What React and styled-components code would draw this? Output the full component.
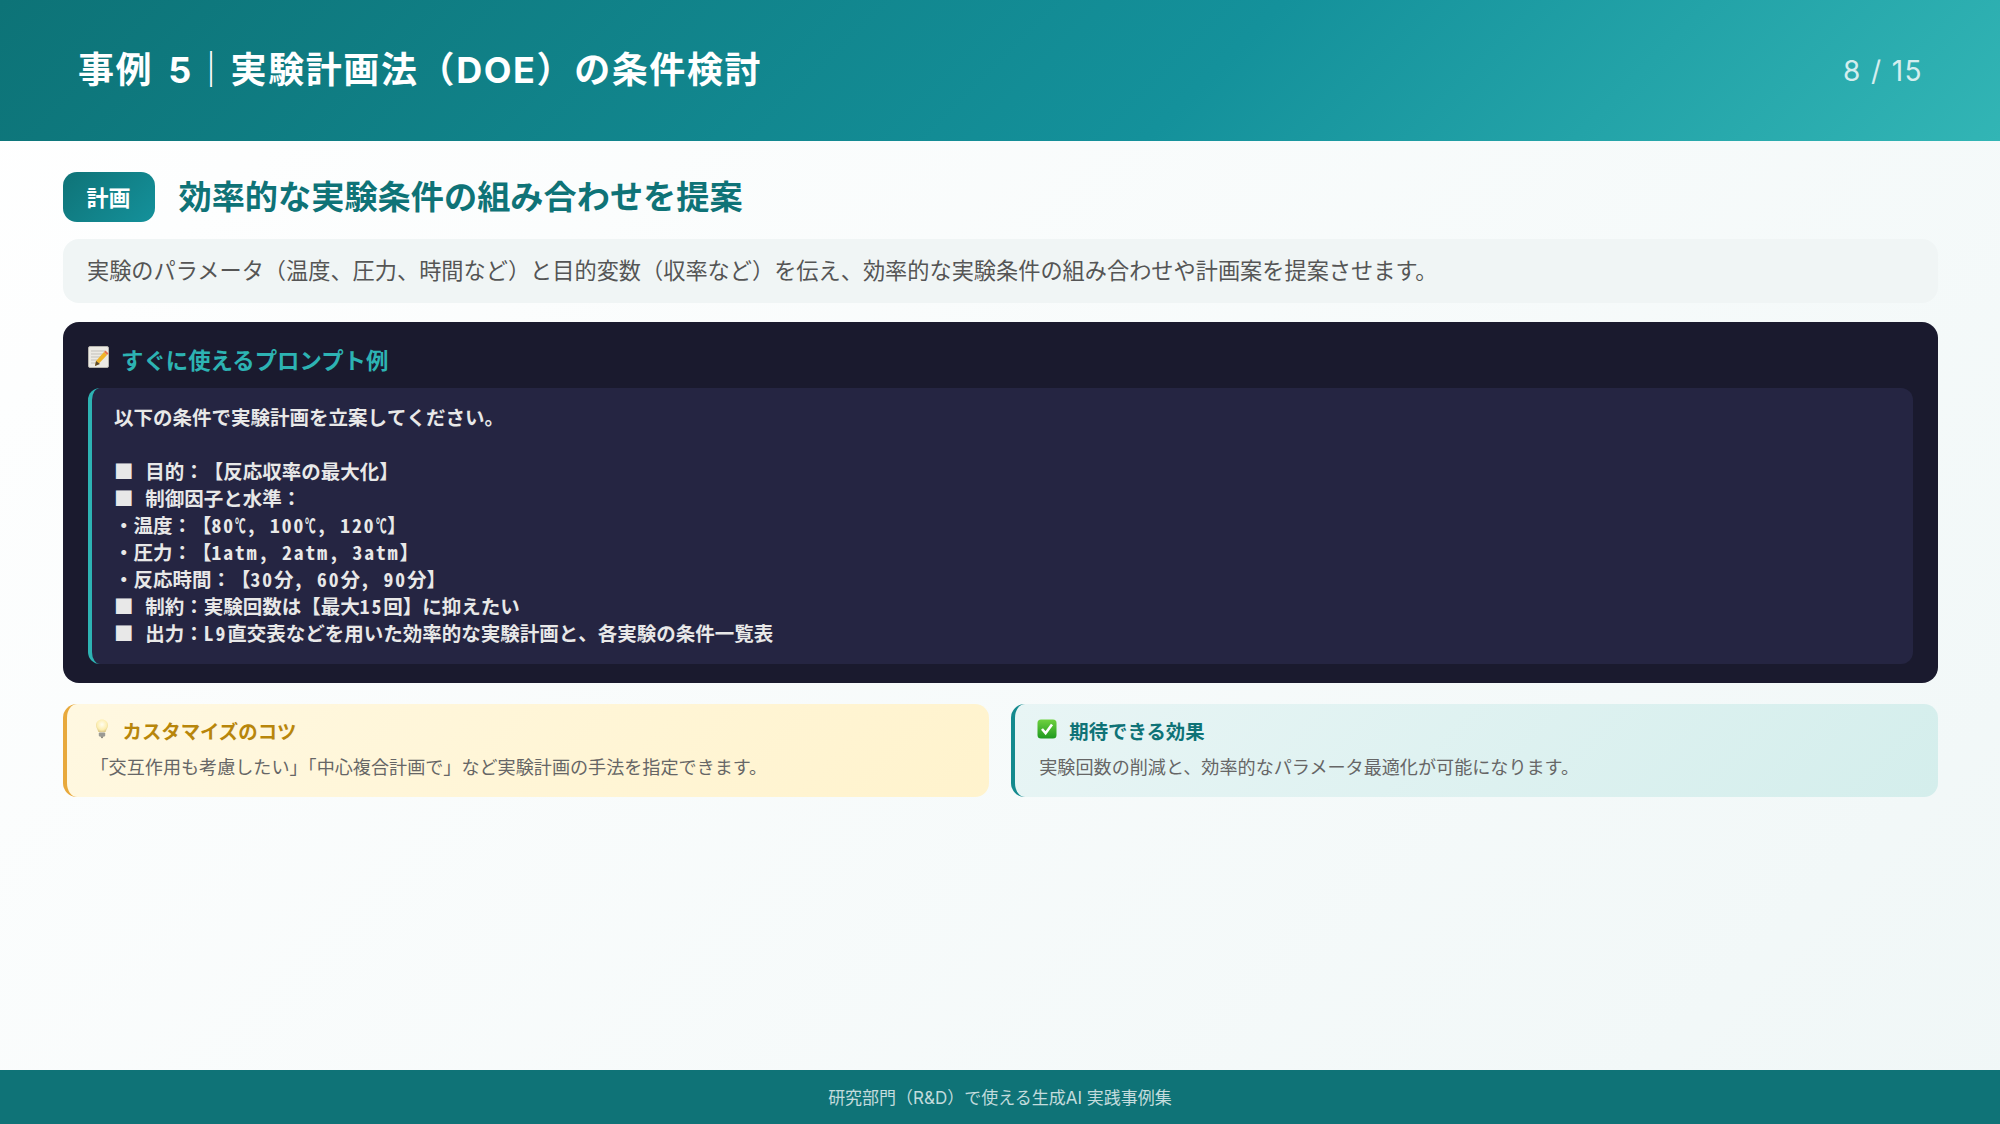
import React from "react";
import styled, { createGlobalStyle } from "styled-components";

const Global = createGlobalStyle`
  html, body { margin: 0; padding: 0; }
  body { font-family: Inter, "Noto Sans CJK JP", sans-serif; }
`;

const Page = styled.div`
  width: 2000px;
  height: 1124px;
  display: flex;
  flex-direction: column;
  background: linear-gradient(135deg, #ffffff 0%, #f0f7f7 100%);
  overflow: hidden;
`;

const Header = styled.header`
  height: 141px;
  box-sizing: border-box;
  padding: 0 77px 8px 78px;
  display: flex;
  align-items: center;
  justify-content: space-between;
  background: linear-gradient(135deg, #0d7377 0%, #14919b 60%, #32b5b5 100%);
  color: #fff;
`;

const Title = styled.h1`
  margin: 0;
  font-size: 36px;
  font-weight: 700;
  letter-spacing: 1.6px;
  word-spacing: 5px;
`;

const PageNo = styled.div`
  font-size: 28px;
  letter-spacing: 1.4px;
  opacity: 0.8;
  margin-top: 8px;
`;

const Main = styled.main`
  flex: 1;
  padding: 31px 62px 0 62.5px;
  display: flex;
  flex-direction: column;
`;

const SectionHead = styled.div`
  height: 50px;
  display: flex;
  align-items: center;
  gap: 24px;
  margin-bottom: 17px;
`;

const Badge = styled.span`
  width: 92px;
  height: 50px;
  padding-bottom: 2px;
  box-sizing: border-box;
  border-radius: 14px;
  background: linear-gradient(135deg, #0f7377 0%, #14919b 100%);
  color: #fff;
  font-size: 22px;
  font-weight: 700;
  display: flex;
  align-items: center;
  justify-content: center;
`;

const SectionTitle = styled.h2`
  margin: 0 0 5px;
  font-size: 33.2px;
  font-weight: 700;
  color: #0f7377;
`;

const Lead = styled.p`
  margin: 0 0 19px;
  height: 64px;
  box-sizing: border-box;
  padding: 0 24.5px 4px;
  display: flex;
  align-items: center;
  border-radius: 16px;
  background: #f0f5f5;
  color: #555;
  font-size: 22.2px;
`;

const PromptCard = styled.section`
  height: 361px;
  box-sizing: border-box;
  padding: 12px 25px 19px 25.5px;
  border-radius: 16px;
  background: #1a1a2e;
  display: flex;
  flex-direction: column;
  margin-bottom: 21px;
`;

const PromptHead = styled.div`
  height: 50px;
  margin-bottom: 3.5px;
  display: flex;
  align-items: center;
  gap: 12px;
  color: #2db3b3;
  font-size: 22.4px;
  font-weight: 700;
`;

const Icon = styled.svg`
  flex: none;
  margin-bottom: 4px;
`;

const PromptBody = styled.pre`
  flex: 1;
  margin: 0;
  padding: 15px 22px;
  border-left: 4px solid #2db3b3;
  border-radius: 12px;
  background: #252542;
  color: #e8e8e8;
  font-family: "Noto Sans Mono CJK JP", "DejaVu Sans Mono", "Noto Sans CJK JP", monospace;
  font-size: 19.5px;
  font-weight: 700;
  line-height: 27px;
  text-spacing-trim: space-all;
`;

/* latin runs sit wider in the reference than the CJK mono's half width */
const Latin = styled.span`
  letter-spacing: 2px;
`;

const Deg = styled.span`
  display: inline-block;
  width: 11.5px;
  transform: scaleX(0.55);
  transform-origin: left center;
`;

const Tips = styled.div`
  display: grid;
  grid-template-columns: 1fr 1fr;
  gap: 22px;
`;

const Tip = styled.div`
  height: 93px;
  box-sizing: border-box;
  padding: 12px 24px;
  border-radius: 14px;
  border-left: 4px solid ${(p) => p.$accent};
  background: ${(p) => p.$bg};
`;

const TipHead = styled.div`
  display: flex;
  align-items: center;
  gap: ${(p) => p.$gap}px;
  height: 29px;
  font-size: 19.4px;
  font-weight: 700;
  color: ${(p) => p.$color};
  margin-bottom: 8px;
`;

const TipText = styled.p`
  margin: 0;
  font-size: 18.1px;
  color: #666;
`;

const Footer = styled.footer`
  height: 54px;
  padding-bottom: 2px;
  box-sizing: border-box;
  background: #0f7377;
  color: rgba(255, 255, 255, 0.75);
  font-size: 17px;
  display: flex;
  align-items: center;
  justify-content: center;
`;

const MemoIcon = () => (
  <Icon width="21" height="22" viewBox="0 0 21 22">
    <rect x="0.5" y="0.5" width="20" height="21" rx="1.5" fill="#eceae4" stroke="#b5b3ad" />
    <path d="M3 5h14M3 8h14M3 11h10M3 14h6M3 17h5" stroke="#c3c1bb" strokeWidth="1" />
    <path d="M7 20l1-5L16 6l3 3-8.5 9z" fill="#f0b429" />
    <path d="M16 6l1.5-1.5 3 3L19 9z" fill="#e8734a" />
    <path d="M7 20l1-5 4 3z" fill="#5b4a2e" />
  </Icon>
);

const BulbIcon = () => (
  <Icon width="22" height="20" viewBox="0 0 22 20">
    <defs>
      <radialGradient id="glass" cx="0.5" cy="0.4" r="0.6">
        <stop offset="0" stopColor="#fffdf0" />
        <stop offset="0.7" stopColor="#fdeeb0" />
        <stop offset="1" stopColor="#dcc98a" />
      </radialGradient>
    </defs>
    <path d="M11 0.5c3.4 0 6 2.5 6 5.8 0 2.6-1.8 4-2.4 6.7H7.4C6.8 10.3 5 8.9 5 6.3 5 3 7.6 0.5 11 0.5z" fill="url(#glass)" />
    <rect x="7.8" y="13.4" width="6.4" height="4" rx="1" fill="#9a9a94" />
    <path d="M9.4 17.6h3.2L11 19.6z" fill="#6d6d68" />
  </Icon>
);

const CheckIcon = () => (
  <Icon width="20" height="20" viewBox="0 0 20 20" style={{ marginLeft: -2 }}>
    <defs>
      <linearGradient id="tick" x1="0" y1="0" x2="0" y2="1">
        <stop offset="0" stopColor="#6fd13f" />
        <stop offset="1" stopColor="#1f9a1f" />
      </linearGradient>
    </defs>
    <rect x="0.5" y="0.5" width="19" height="19" rx="3.5" fill="url(#tick)" />
    <path d="M5 10l3.6 4.2L15 5.4" fill="none" stroke="#fff" strokeWidth="2.6" />
  </Icon>
);

const promptText = `以下の条件で実験計画を立案してください。

■ 目的：【反応収率の最大化】
■ 制御因子と水準：
・温度：【80℃, 100℃, 120℃】
・圧力：【1atm, 2atm, 3atm】
・反応時間：【30分, 60分, 90分】
■ 制約：実験回数は【最大15回】に抑えたい
■ 出力：L9直交表などを用いた効率的な実験計画と、各実験の条件一覧表`;

const renderPrompt = (text) =>
  text.split(/([A-Za-z0-9, ]+|℃)/).map((part, i) => {
    if (part === "℃") return <Deg key={i}>℃</Deg>;
    if (/^[A-Za-z0-9, ]+$/.test(part)) return <Latin key={i}>{part}</Latin>;
    return part;
  });

export default function App() {
  return (
    <Page>
      <Global />
      <Header>
        <Title>事例 5｜実験計画法（DOE）の条件検討</Title>
        <PageNo>8 / 15</PageNo>
      </Header>
      <Main>
        <SectionHead>
          <Badge>計画</Badge>
          <SectionTitle>効率的な実験条件の組み合わせを提案</SectionTitle>
        </SectionHead>
        <Lead>実験のパラメータ（温度、圧力、時間など）と目的変数（収率など）を伝え、効率的な実験条件の組み合わせや計画案を提案させます。</Lead>
        <PromptCard>
          <PromptHead>
            <MemoIcon />すぐに使えるプロンプト例
          </PromptHead>
          <PromptBody>{renderPrompt(promptText)}</PromptBody>
        </PromptCard>
        <Tips>
          <Tip $accent="#e8a93c" $bg="linear-gradient(135deg, #fff8e1 0%, #fff3cd 100%)">
            <TipHead $color="#b8860b" $gap={10}>
              <BulbIcon />カスタマイズのコツ
            </TipHead>
            <TipText>「交互作用も考慮したい」「中心複合計画で」など実験計画の手法を指定できます。</TipText>
          </Tip>
          <Tip $accent="#148a8e" $bg="linear-gradient(135deg, #e8f5f5 0%, #d4eeec 100%)">
            <TipHead $color="#0f7377" $gap={12}>
              <CheckIcon />期待できる効果
            </TipHead>
            <TipText>実験回数の削減と、効率的なパラメータ最適化が可能になります。</TipText>
          </Tip>
        </Tips>
      </Main>
      <Footer>研究部門（R&amp;D）で使える生成AI 実践事例集</Footer>
    </Page>
  );
}
